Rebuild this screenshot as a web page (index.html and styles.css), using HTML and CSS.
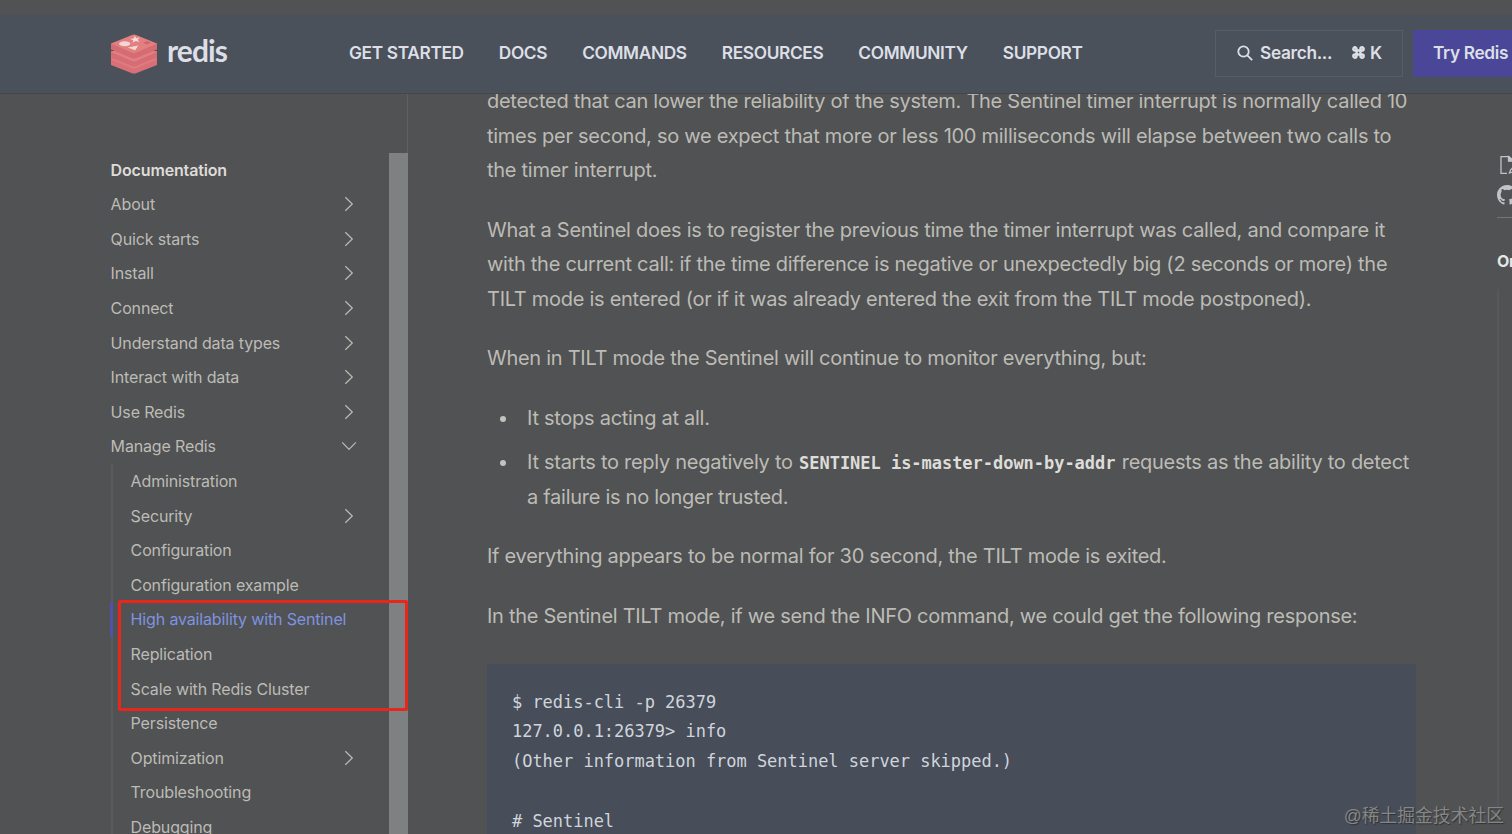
FILE: index.html
```
<!DOCTYPE html>
<html lang="en">
<head>
    <meta charset="UTF-8">
    <meta name="viewport" content="width=device-width, initial-scale=1.0">
    <title>High availability with Redis Sentinel | Redis</title>
    <link rel="stylesheet" href="styles.css">
</head>
<body>
    <svg width="0" height="0" class="sprite">
        <symbol id="chevron" viewBox="0 0 16 16">
            <path d="M4.3 1.2 L11.3 8 L4.3 14.8" fill="none" stroke="currentColor" stroke-width="1.2"/>
        </symbol>
    </svg>

    <!-- Header -->
    <header class="header">
        <a class="logo">
            <svg class="logo-cube" width="48" height="40" viewBox="0 0 48 40">
                <path d="M1 23 H47 V31 L26 39.2 Q24 40 22 39.2 L1 31 Z" fill="#d97078"/>
                <path d="M1 25.5 L24 16 L47 25.5 L26 34.2 Q24 35 22 34.2 Z" fill="#e07b80"/>
                <path d="M1 17 H47 V23.5 L26 32 Q24 32.8 22 32 L1 23.5 Z" fill="#d66c74"/>
                <path d="M1 18 L24 9 L47 18 L26 27 Q24 27.8 22 27 Z" fill="#e27f84"/>
                <path d="M1 9.5 H47 V15.5 L26 24.3 Q24 25.2 22 24.3 L1 15.5 Z" fill="#d66c73"/>
                <path d="M1 9.5 L22 .9 Q24 .2 26 .9 L47 9.5 L26 18.8 Q24 19.6 22 18.8 Z" fill="#e27f80"/>
                <ellipse cx="14.7" cy="9.7" rx="5.6" ry="2.5" fill="#f0d6d6"/>
                <path d="M24.8 1.8 L26.3 4.2 L30 3.5 L27.5 5.7 L29.5 8 L25.8 7.1 L22.5 8.5 L23.3 6.2 L20 4.7 L23.8 4.4 Z" fill="#f3dcdc"/>
                <path d="M17.7 13.4 L28.3 11.5 L25.2 16.3 Z" fill="#f0dcc8"/>
                <path d="M33 8.8 L37 7 L41 8.8 L37 10.5 Z" fill="#d0666c"/>
            </svg>
            <span class="logo-text">redis</span>
        </a>
        <nav class="menu">
            <a>GET STARTED</a>
            <a>DOCS</a>
            <a>COMMANDS</a>
            <a>RESOURCES</a>
            <a>COMMUNITY</a>
            <a>SUPPORT</a>
        </nav>
        <button class="search">
            <svg width="16" height="16" viewBox="0 0 16 16" fill="none" stroke="currentColor" stroke-width="1.8">
                <circle cx="6.5" cy="6.5" r="5.2"/>
                <path d="M10.3 10.3 L15.2 15.2"/>
            </svg>
            <span class="search-label">Search...</span>
            <svg class="cmd" width="13" height="13" viewBox="0 0 12 12" fill="none" stroke="currentColor" stroke-width="2.2">
                <path d="M4.2 4.2 H2.7 A1.5 1.5 0 1 1 4.2 2.7 V9.3 A1.5 1.5 0 1 1 2.7 7.8 H9.3 A1.5 1.5 0 1 1 7.8 9.3 V2.7 A1.5 1.5 0 1 1 9.3 4.2 Z"/>
            </svg>
            <span>K</span>
        </button>
        <a class="try-btn">Try Redis</a>
    </header>

    <div class="layout">
        <!-- Sidebar -->
        <aside class="sidebar">
            <ul class="nav">
                <li class="title">Documentation</li>
                <li>About <svg class="chev"><use href="#chevron"/></svg></li>
                <li>Quick starts <svg class="chev"><use href="#chevron"/></svg></li>
                <li>Install <svg class="chev"><use href="#chevron"/></svg></li>
                <li>Connect <svg class="chev"><use href="#chevron"/></svg></li>
                <li>Understand data types <svg class="chev"><use href="#chevron"/></svg></li>
                <li>Interact with data <svg class="chev"><use href="#chevron"/></svg></li>
                <li>Use Redis <svg class="chev"><use href="#chevron"/></svg></li>
                <li>Manage Redis <svg class="chev open"><use href="#chevron"/></svg></li>
            </ul>
            <ul class="nav subnav">
                <li>Administration</li>
                <li>Security <svg class="chev"><use href="#chevron"/></svg></li>
                <li>Configuration</li>
                <li>Configuration example</li>
                <li class="active">High availability with Sentinel</li>
                <li>Replication</li>
                <li>Scale with Redis Cluster</li>
                <li>Persistence</li>
                <li>Optimization <svg class="chev"><use href="#chevron"/></svg></li>
                <li>Troubleshooting</li>
                <li>Debugging</li>
            </ul>
            <div class="scrollbar"></div>
            <div class="highlight"></div>
        </aside>

        <!-- Article -->
        <main class="content">
            <p>detected that can lower the reliability of the system. The Sentinel timer interrupt is normally called 10<br>
            times per second, so we expect that more or less 100 milliseconds will elapse between two calls to<br>
            the timer interrupt.</p>
            <p>What a Sentinel does is to register the previous time the timer interrupt was called, and compare it<br>
            with the current call: if the time difference is negative or unexpectedly big (2 seconds or more) the<br>
            TILT mode is entered (or if it was already entered the exit from the TILT mode postponed).</p>
            <p>When in TILT mode the Sentinel will continue to monitor everything, but:</p>
            <ul class="list">
                <li>It stops acting at all.</li>
                <li>It starts to reply negatively to <code>SENTINEL is-master-down-by-addr</code> requests as the ability to detect<br>
                a failure is no longer trusted.</li>
            </ul>
            <p>If everything appears to be normal for 30 second, the TILT mode is exited.</p>
            <p>In the Sentinel TILT mode, if we send the INFO command, we could get the following response:</p>
<pre class="code">$ redis-cli -p 26379
127.0.0.1:26379&gt; info
(Other information from Sentinel server skipped.)

# Sentinel
</pre>
        </main>

        <!-- Page tools, cut off by the window edge -->
        <aside class="tools">
            <svg class="edit-icon" width="20" height="20" viewBox="0 0 20 20" fill="none" stroke="currentColor" stroke-width="1.3">
                <path d="M10 18.3 H4 V1.7 H12 L17 6.2 V8"/>
                <path d="M11.5 1.7 V6.2 H17 Z" fill="currentColor"/>
                <path d="M12.5 18 L13.5 15 L18 10.5 L20 12.5 L15.5 17 Z"/>
            </svg>
            <svg class="github-icon" width="20" height="20" viewBox="0 0 16 16" fill="currentColor">
                <path d="M8 0C3.58 0 0 3.58 0 8c0 3.54 2.29 6.53 5.47 7.59.4.07.55-.17.55-.38 0-.19-.01-.82-.01-1.49-2.01.37-2.53-.49-2.69-.94-.09-.23-.48-.94-.82-1.13-.28-.15-.68-.52-.01-.53.63-.01 1.08.58 1.23.82.72 1.21 1.87.87 2.33.66.07-.52.28-.87.51-1.07-1.78-.2-3.64-.89-3.64-3.95 0-.87.31-1.59.82-2.15-.08-.2-.36-1.02.08-2.12 0 0 .67-.21 2.2.82a7.42 7.42 0 0 1 4 0c1.53-1.04 2.2-.82 2.2-.82.44 1.1.16 1.92.08 2.12.51.56.82 1.27.82 2.15 0 3.07-1.87 3.75-3.65 3.95.29.25.54.73.54 1.48 0 1.07-.01 1.93-.01 2.2 0 .21.15.46.55.38A8.01 8.01 0 0 0 16 8c0-4.42-3.58-8-8-8z"/>
            </svg>
            <div class="toc-title">On this page</div>
            <div class="toc"></div>
        </aside>
    </div>

    <div class="watermark">@稀土掘金技术社区</div>
</body>
</html>
```
FILE: styles.css
```
* {
    box-sizing: border-box;
}

body {
    margin: 0;
    width: 1512px;
    height: 834px;
    padding-top: 15px;
    overflow: hidden;
    position: relative;
    font-family: 'Inter', sans-serif;
    background-color: #505253;
    color: #bdbbb6;
}

ul {
    list-style: none;
    margin: 0;
    padding: 0;
}

.sprite {
    position: absolute;
}

/* Header */
.header {
    display: flex;
    align-items: center;
    height: 79px;
    padding-left: 110px;
    background-color: #4b515a;
    border-bottom: 1px solid #45484b;
    color: #dcdfe6;
    font-size: 17.3px;
    font-weight: 600;
    letter-spacing: -0.34px;
    white-space: nowrap;
    overflow: hidden;
}

.logo {
    display: flex;
    align-items: center;
    gap: 9px;
    width: 239px;
    flex-shrink: 0;
}

.logo-text {
    font-family: 'Lato', sans-serif;
    font-size: 30px;
    font-weight: 700;
    line-height: 36px;
    letter-spacing: -0.9px;
    margin-top: -8px;
}

.menu {
    display: flex;
    gap: 35px;
    width: 866px;
    flex-shrink: 0;
    margin-top: -3px;
}

.search {
    display: flex;
    align-items: center;
    flex-shrink: 0;
    width: 188px;
    height: 47px;
    margin-top: -1px;
    padding: 0 0 2px 21px;
    background: none;
    border: 1px solid #575c65;
    color: inherit;
    font: inherit;
    letter-spacing: inherit;
}

.search-label {
    margin-left: 7px;
    width: 92px;
    text-align: left;
}

.cmd {
    margin-right: 5px;
}

.try-btn {
    flex-shrink: 0;
    width: 140px;
    height: 47px;
    margin: -1px 0 0 10px;
    padding-left: 20px;
    line-height: 46px;
    background-color: #4a4799;
}

.layout {
    display: flex;
    height: 740px;
    overflow: hidden;
}

/* Sidebar */
.sidebar {
    position: relative;
    flex-shrink: 0;
    width: 408px;
    height: 740px;
    padding: 58.4px 0 0 110.6px;
    border-right: 1px solid #5d6060;
    font-size: 16px;
    letter-spacing: -0.15px;
}

.nav li {
    display: flex;
    align-items: center;
    justify-content: space-between;
    width: 246px;
    height: 34.6px;
    white-space: nowrap;
}

.nav .title {
    font-weight: 600;
    color: #dedcd8;
}

.subnav {
    border-left: 2px solid #585a5b;
}

.subnav li {
    width: 244px;
    padding-left: 18px;
}

.subnav .active {
    color: #7f92e0;
    box-shadow: -3px 0 0 #5350a8;
}

.chev {
    width: 16px;
    height: 16px;
}

.chev.open {
    transform: rotate(90deg);
}

.scrollbar {
    position: absolute;
    top: 59px;
    right: -1px;
    width: 19px;
    height: 681px;
    background-color: #7d8182;
}

/* Frame around the Sentinel, replication and cluster links */
.highlight {
    position: absolute;
    left: 118px;
    top: 506px;
    width: 290px;
    height: 111px;
    border: 3px solid #e8261c;
    border-radius: 2px;
}

/* Article */
.content {
    flex-shrink: 0;
    width: 1089px;
    padding-left: 79px;
    margin-top: -10px;
    font-size: 20px;
    line-height: 34.5px;
    letter-spacing: -0.275px;
    white-space: nowrap;
}

.content p {
    margin: 0 0 25px;
}

.list {
    margin-bottom: 25px;
}

.list li {
    position: relative;
    padding-left: 40px;
    margin-bottom: 10px;
}

.list li::before {
    content: "";
    position: absolute;
    left: 13px;
    top: 15px;
    width: 6px;
    height: 6px;
    border-radius: 50%;
    background-color: #c4c2bf;
}

code,
.code {
    font-family: 'DejaVu Sans Mono', monospace;
    letter-spacing: -0.03px;
}

code {
    margin: 0 1px;
    font-size: 17px;
    font-weight: 700;
    line-height: 1;
    color: #dedcd8;
}

.code {
    width: 929px;
    height: 240px;
    margin: 31px 0 0;
    padding: 23.6px 25px;
    background-color: #474d59;
    color: #d0d5dc;
    font-size: 17px;
    line-height: 29.8px;
}

/* Right column */
.tools {
    display: flex;
    flex-direction: column;
    flex-shrink: 0;
    width: 200px;
    padding-top: 61px;
    color: #c0c3c8;
}

.github-icon {
    margin-top: 10px;
}

.toc-title {
    margin-top: 12px;
    padding-top: 33px;
    border-top: 1px solid #747777;
    font-size: 16px;
    font-weight: 700;
    line-height: 20px;
    letter-spacing: -0.3px;
    color: #e6e6e4;
}

.toc {
    height: 520px;
    margin-top: 18px;
    border-left: 2px solid #565859;
}

.watermark {
    position: absolute;
    right: 8px;
    bottom: 5px;
    font-family: 'Liberation Sans', 'Noto Sans CJK SC', sans-serif;
    font-size: 17.8px;
    line-height: 26px;
    color: #858687;
    text-shadow: 1px 1px 1px #303233;
}
```
